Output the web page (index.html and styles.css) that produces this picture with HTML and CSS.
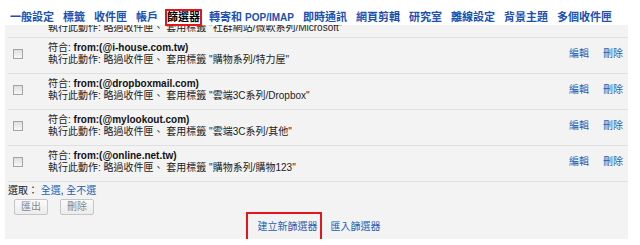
FILE: index.html
```html
<!DOCTYPE html>
<html lang="zh-Hant">
<head>
<meta charset="utf-8">
<title>篩選器</title>
<link rel="stylesheet" href="styles.css">
</head>
<body>
<nav class="tabs">
  <a class="tab">一般設定</a>
  <a class="tab">標籤</a>
  <a class="tab">收件匣</a>
  <a class="tab">帳戶</a>
  <a class="tab active">篩選器</a>
  <a class="tab">轉寄和 <span class="latin">POP/IMAP</span></a>
  <a class="tab">即時通訊</a>
  <a class="tab">網頁剪輯</a>
  <a class="tab">研究室</a>
  <a class="tab">離線設定</a>
  <a class="tab">背景主題</a>
  <a class="tab">多個收件匣</a>
</nav>
<section class="panel">
  <div class="row partial">
    <div class="partial-inner">執行此動作: 略過收件匣、 套用標籤 "社群網站/微軟系列/Microsoft"</div>
  </div>
  <div class="row">
    <div class="cb-cell"><span class="cb"></span></div>
    <div class="desc">
      <div>符合: <b>from:(@i-house.com.tw)</b></div>
      <div>執行此動作: 略過收件匣、 套用標籤 "購物系列/特力屋"</div>
    </div>
    <div class="actions"><a>編輯</a><a>刪除</a></div>
  </div>
  <div class="row">
    <div class="cb-cell"><span class="cb"></span></div>
    <div class="desc">
      <div>符合: <b>from:(@dropboxmail.com)</b></div>
      <div>執行此動作: 略過收件匣、 套用標籤 "雲端3C系列/Dropbox"</div>
    </div>
    <div class="actions"><a>編輯</a><a>刪除</a></div>
  </div>
  <div class="row">
    <div class="cb-cell"><span class="cb"></span></div>
    <div class="desc">
      <div>符合: <b>from:(@mylookout.com)</b></div>
      <div>執行此動作: 略過收件匣、 套用標籤 "雲端3C系列/其他"</div>
    </div>
    <div class="actions"><a>編輯</a><a>刪除</a></div>
  </div>
  <div class="row">
    <div class="cb-cell"><span class="cb"></span></div>
    <div class="desc">
      <div>符合: <b>from:(@online.net.tw)</b></div>
      <div>執行此動作: 略過收件匣、 套用標籤 "購物系列/購物123"</div>
    </div>
    <div class="actions"><a>編輯</a><a>刪除</a></div>
  </div>
  <div class="select-line">選取： <a>全選</a>, <a>全不選</a></div>
  <div class="buttons">
    <span class="btn">匯出</span>
    <span class="btn">刪除</span>
  </div>
  <div class="bottom-links">
    <a class="create">建立新篩選器</a>
    <a class="import">匯入篩選器</a>
  </div>
</section>
</body>
</html>
```
FILE: styles.css
```css
* { box-sizing: border-box; }
html, body {
  margin: 0;
  background: #fff;
}
body {
  font-family: "Liberation Sans", "Noto Sans CJK TC", sans-serif;
  font-size: 10px;
  color: #222;
  width: 640px;
  height: 245px;
  overflow: hidden;
}
a { color: #2a5db0; cursor: pointer; }

.tabs {
  display: flex;
  gap: 5px;
  padding: 9px 0 0 8px;
  position: relative;
  z-index: 1;
}
.tab {
  font-size: 11px;
  font-weight: bold;
  line-height: 12px;
  border: 2px solid transparent;
  color: #2050b0;
  white-space: nowrap;
}
.tab .latin { font-size: 10px; }
.tab.active {
  color: #000;
  border-color: #e8141b;
}

.panel {
  margin: -1px 0 0 5px;
  width: 623px;
  height: 214px;
  background: #f3f3f3;
  padding: 0 0 0 3px;
  overflow: hidden;
}

.row {
  display: flex;
  align-items: center;
  border-bottom: 1px solid #e0e0e0;
  padding: 4px 0 7px;
  line-height: 12px;
  color: #222;
}
.row.partial {
  height: 13px;
  padding: 0;
  overflow: hidden;
  align-items: flex-start;
}
.partial-inner {
  margin: -3px 0 0 40px;
  white-space: nowrap;
}
.cb-cell {
  width: 40px;
  flex: none;
  padding-left: 5px;
  display: flex;
}
.cb {
  width: 10px;
  height: 10px;
  border: 1px solid #a4a4a4;
  background: linear-gradient(#dedede, #f8f8f8);
}
.desc {
  flex: 1;
  white-space: nowrap;
}
.desc b { color: #111; }
.actions {
  display: flex;
  gap: 14px;
  padding-right: 5px;
}

.select-line {
  line-height: 12px;
  padding: 3px 0 0 0;
}
.buttons {
  display: flex;
  gap: 12px;
  padding: 2px 0 0 6px;
}
.btn {
  height: 16px;
  line-height: 14px;
  padding: 0 6px;
  border: 1px solid #c6c6c6;
  border-radius: 2px;
  background: linear-gradient(#fafafa, #ececec);
  color: #888;
}

.bottom-links {
  display: flex;
  justify-content: center;
  align-items: center;
  margin-top: -3px;
  padding-right: 10px;
  line-height: 12px;
}
.create {
  border: 2px solid #e8141b;
  padding: 7px 2px 6px 10px;
}
.import {
  margin-left: 9px;
}
```
